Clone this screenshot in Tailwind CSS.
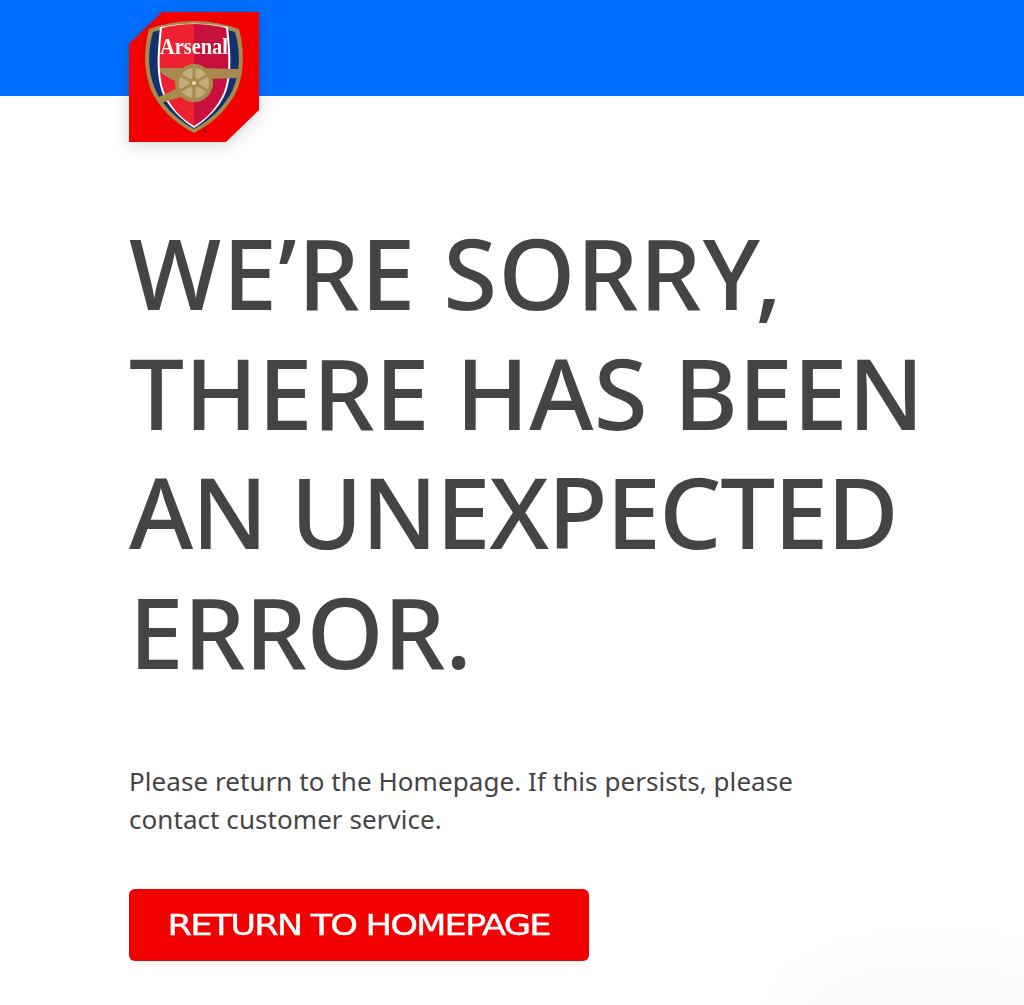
<!DOCTYPE html>
<html lang="en">
<head>
    <meta charset="UTF-8">
    <meta name="viewport" content="width=device-width, initial-scale=1.0">
    <title>Arsenal | Error</title>
    <script src="https://cdn.jsdelivr.net/npm/@tailwindcss/browser@4"></script>
</head>
<body class="bg-white font-['Noto_Sans',sans-serif] text-[#444444]">
    <div class="relative h-[1005px] w-[1024px] overflow-hidden">
        <!-- Header -->
        <header class="h-24 bg-[#006fff]"></header>

        <!-- Logo -->
        <a href="#" class="absolute left-[129px] top-3 block h-[130px] w-[130px] drop-shadow-[0_3px_9px_rgba(0,0,0,0.16)]">
            <svg viewBox="129 12 130 130" class="h-full w-full">
                <polygon points="162,12 259,12 259,110 226,142 129,142 129,44" fill="#f30000"/>
                <path d="M149 29 Q194 13 239 29 C244 48 245 70 237 90 C229 108 212 124 194 133 C176 124 159 108 151 90 C143 70 144 48 149 29Z" fill="#a88a4e"/>
                <path d="M153 32 Q194 19 235 32 C240 49 241 70 233 89 C226 105 211 120 194 129 C177 120 162 105 155 89 C147 70 148 49 153 32Z" fill="#12326f"/>
                <path d="M160 27 C157 55 156 75 162 92 C168 107 180 119 194 128 C208 119 220 107 226 92 C232 75 231 55 228 27 Q194 20 160 27Z" fill="#ffffff"/>
                <path d="M162 28 Q178 24 194 24 L194 126 C180 118 170 106 164 92 C158 75 159 55 162 28Z" fill="#ee2131"/>
                <path d="M226 28 Q210 24 194 24 L194 126 C208 118 218 106 224 92 C230 75 229 55 226 28Z" fill="#c8103f"/>
                <text x="160" y="54" textLength="68" lengthAdjust="spacingAndGlyphs" font-family="Liberation Serif, serif" font-weight="700" font-size="23" fill="#fffdf5">Arsenal</text>
                <path d="M160 70 Q160 67 165 68 L185 68 L240 69 L240 78 L206 79 L182 83 C176 82 168 78 160 72Z" fill="#a88a4e"/>
                <path d="M178 88 L157 98 L161 103 L184 96Z" fill="#a88a4e"/>
                <circle cx="194" cy="83" r="17" fill="#c4ad7c" stroke="#a88a4e" stroke-width="4"/>
                <g stroke="#a88a4e" stroke-width="3" fill="none">
                    <path d="M194 66 V100 M179.3 74.5 L208.7 91.5 M208.7 74.5 L179.3 91.5"/>
                </g>
                <circle cx="194" cy="83" r="5" fill="#a88a4e"/>
                <circle cx="194" cy="83" r="2" fill="#e8d9b0"/>
                <circle cx="205" cy="131" r="1.6" fill="#7a1420"/>
            </svg>
        </a>

        <!-- Message -->
        <main class="pl-[129px] pt-[117px]">
            <h1 class="whitespace-nowrap text-[98px] leading-[119.5px] font-medium uppercase">
                <span class="block tracking-[1.2px]">We’re sorry,</span>
                <span class="block tracking-[0.3px]">there has been</span>
                <span class="block tracking-[-1.4px]">an unexpected</span>
                <span class="block tracking-[-0.2px]">error.</span>
            </h1>
            <p class="mt-[71px] w-[700px] text-[26px] leading-[38px] tracking-[0.06px]">Please return to the Homepage. If this persists, please contact customer service.</p>
            <a href="#" class="mt-[51px] flex h-[72px] w-[460px] items-center justify-center rounded-md bg-[#f30000] text-[28px] text-white font-['DejaVu_Sans',sans-serif]">
                <span class="inline-block scale-x-[1.26] pt-[2px] tracking-[-1.5px] [-webkit-text-stroke:0.4px_white]">RETURN TO HOMEPAGE</span>
            </a>
        </main>

        <!-- Faint glow bottom right -->
        <div class="absolute -bottom-[60px] -right-[60px] h-[110px] w-[300px] rounded-[50%] bg-black/[0.02] blur-xl"></div>
    </div>
</body>
</html>
